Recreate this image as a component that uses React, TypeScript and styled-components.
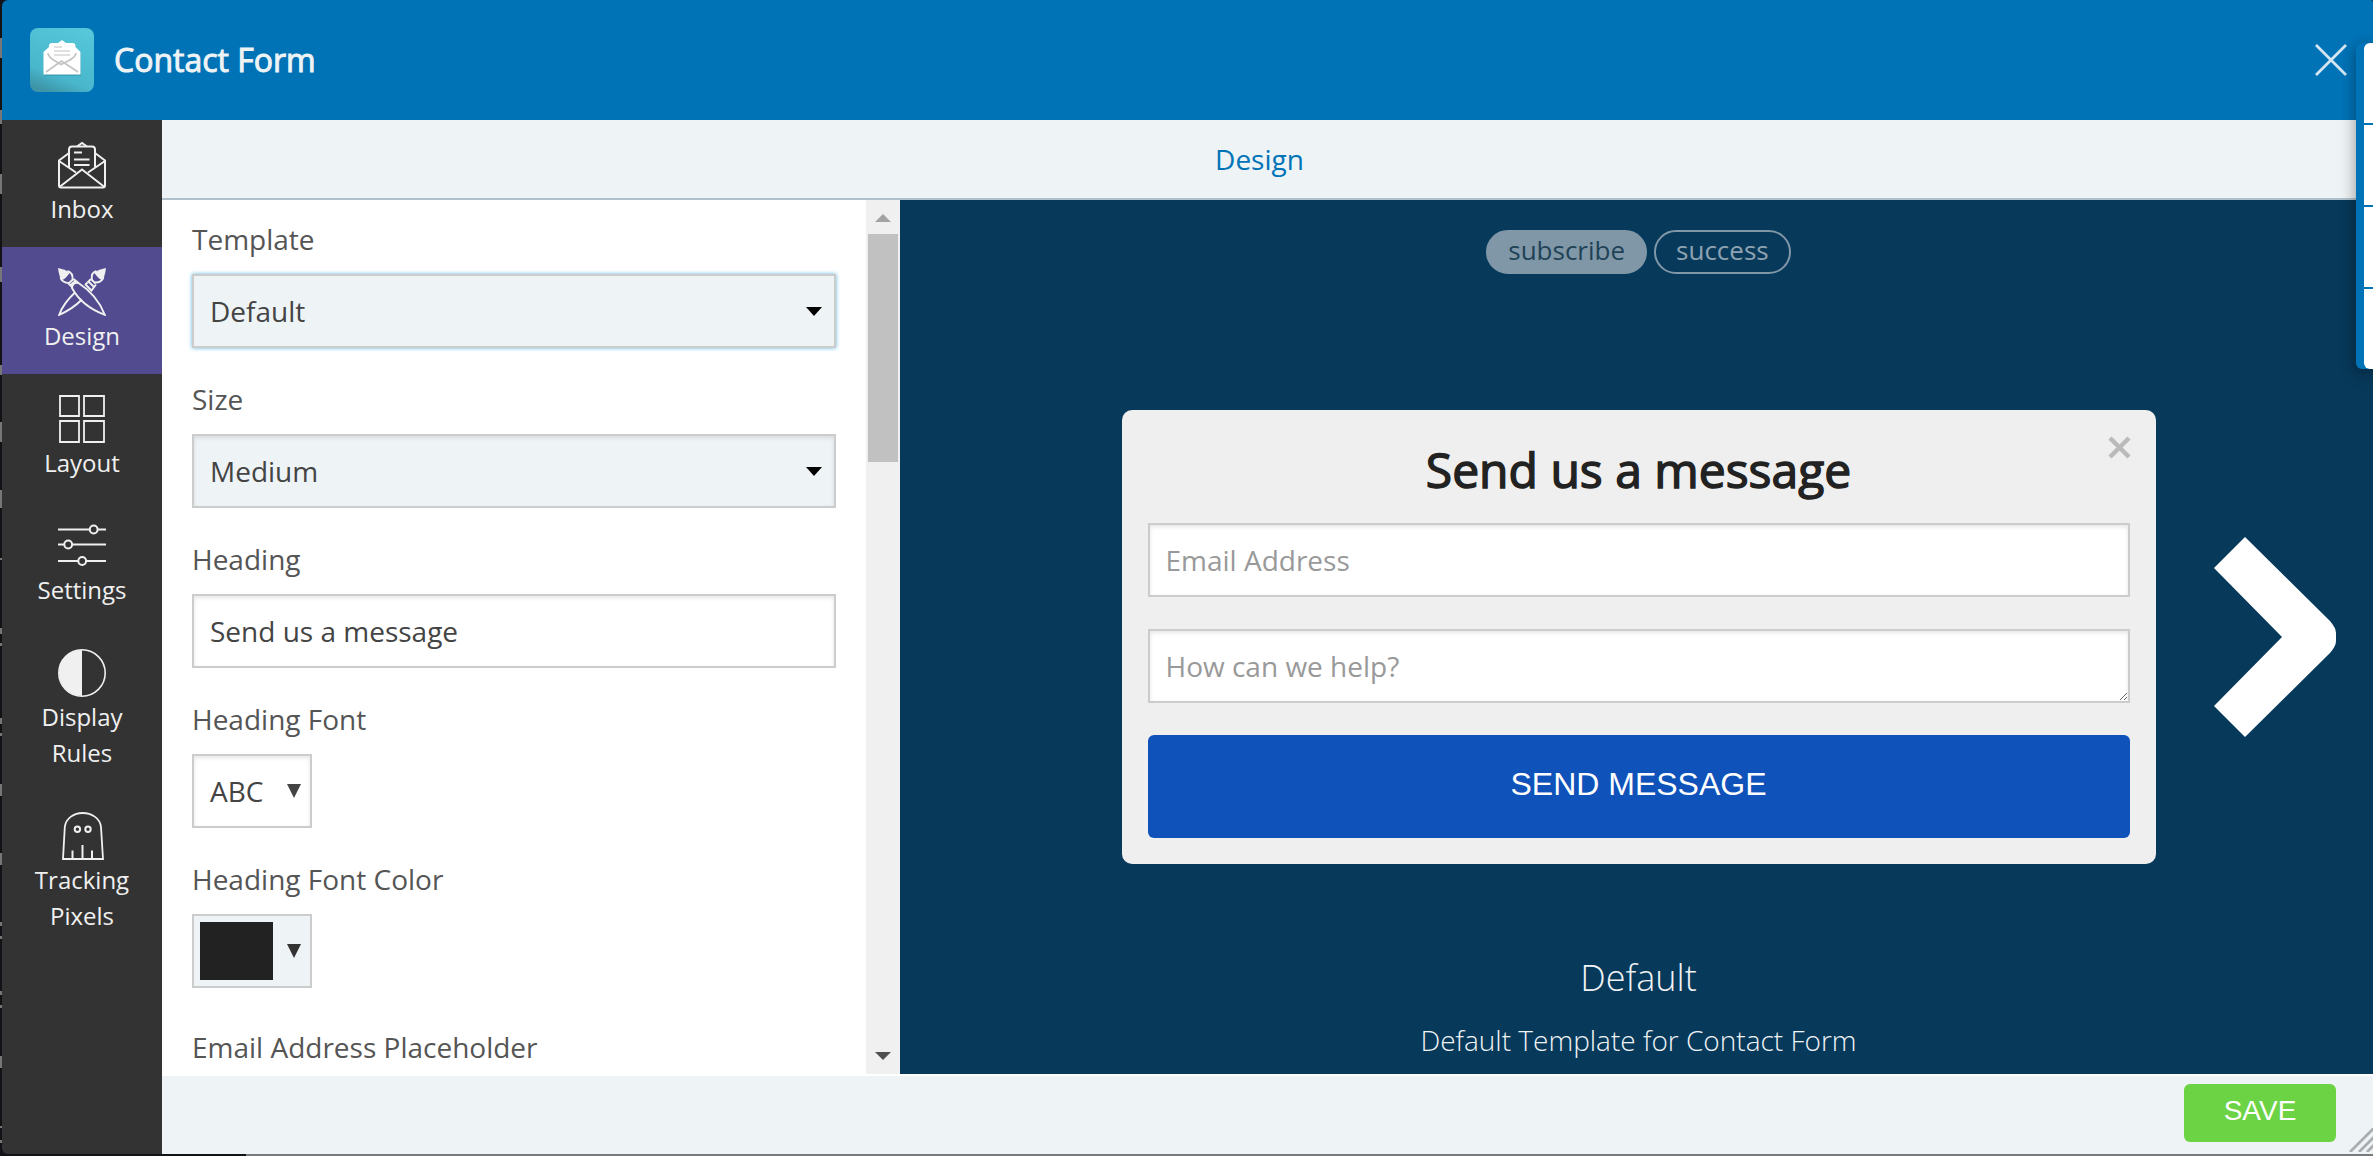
import React from "react";
import styled, { createGlobalStyle, css } from "styled-components";

const color = {
  blue: "#0073b7",
  navy: "#07395a",
  mist: "#eef3f6",
  sidebar: "#333333",
  violet: "#524b8f",
  border: "#cccccc",
  text: "#555555",
};

const sans = `"Open Sans", "Noto Sans", sans-serif`;
const arial = `"Liberation Sans", Arial, sans-serif`;

const Global = createGlobalStyle`
  *, *::before, *::after { box-sizing: border-box; }
  body { margin: 0; background: #131317; font-family: ${sans}; }
  button, input, select, textarea { font: inherit; margin: 0; }
`;

/* Slivers of the page behind the dialog that show at its left edge: [top, bottom]. */
const slivers = [
  [38, 58], [110, 124], [174, 194], [267, 282], [365, 375], [422, 442], [490, 508],
  [558, 560], [628, 634], [643, 646], [718, 724], [733, 736], [784, 796], [853, 865],
  [922, 926], [936, 939], [991, 995], [1005, 1008], [1056, 1068], [1126, 1128], [1140, 1143],
];
const sliverGradient = `linear-gradient(to bottom, ${slivers
  .map(([a, b]) => `transparent ${a}px, #777 ${a}px, #777 ${b}px, transparent ${b}px`)
  .join(", ")})`;

const Backdrop = styled.div`
  display: flex;
  height: 100vh;
  overflow: hidden;
  padding: 0 0 2px 2px;
  background:
    ${sliverGradient} left top / 2px 100% no-repeat,
    linear-gradient(to right, #131317 246px, #7a7a7a 246px) left bottom / 100% 2px no-repeat,
    #131317;
`;

const Dialog = styled.section`
  flex: 1;
  min-width: 0;
  display: flex;
  flex-direction: column;
  border-radius: 6px 2px 0 6px;
  overflow: hidden;
`;

const TitleBar = styled.header`
  display: flex;
  align-items: center;
  gap: 20px;
  height: 120px;
  padding: 0 26px 0 28px;
  background: ${color.blue};
`;

const fauxBold = css`
  font-weight: 400;
  -webkit-text-stroke: 0.03em currentColor;
`;

const DialogTitle = styled.h1`
  ${fauxBold}
  flex: 1;
  margin: 0;
  font-size: 32px;
  line-height: 48px;
  color: ${color.mist};
`;

const PlainButton = styled.button`
  display: flex;
  padding: 0;
  border: 0;
  background: none;
  cursor: pointer;
`;

const Body = styled.div`
  flex: 1;
  min-height: 0;
  display: flex;
`;

const Sidebar = styled.nav`
  width: 160px;
  background: ${color.sidebar};
`;

const NavItem = styled.a<{ $active?: boolean }>`
  display: flex;
  flex-direction: column;
  align-items: center;
  gap: 2px;
  padding: 21px 30px 20px;
  font-size: 24px;
  line-height: 36px;
  text-align: center;
  text-decoration: none;
  color: #f0f0f0;
  background: ${(p) => (p.$active ? color.violet : "transparent")};
`;

const Main = styled.div`
  flex: 1;
  min-width: 0;
  display: flex;
  flex-direction: column;
  background: ${color.mist};
`;

const TabBar = styled.div`
  display: flex;
  justify-content: center;
  align-items: center;
  height: 80px;
  padding-right: 16px;
  border-bottom: 2px solid #b0c1cc;
`;

const Tab = styled.a`
  font-size: 28px;
  line-height: 42px;
  color: ${color.blue};
  text-decoration: none;
`;

const Workspace = styled.div`
  flex: 1;
  min-height: 0;
  display: flex;
  border-bottom: 2px solid #fff;
`;

const FormPane = styled.div`
  display: flex;
  width: 738px;
  background: #fff;
`;

const Form = styled.form`
  flex: 1;
  min-width: 0;
  overflow: hidden;
  padding: 18px 30px 0;
`;

const Field = styled.div<{ $spaced?: boolean }>`
  display: flex;
  flex-direction: column;
  align-items: flex-start;
  gap: 14px;
  margin-bottom: ${(p) => (p.$spaced ? 38 : 30)}px;
`;

const Label = styled.label`
  font-size: 28px;
  line-height: 42px;
  color: ${color.text};
`;

const boxed = css`
  height: 74px;
  border: 2px solid ${color.border};
  border-radius: 0;
  font-size: 28px;
  color: #444;
  outline: none;
`;

const TextInput = styled.input`
  ${boxed}
  width: 100%;
  padding: 0 16px;
  background: #fff;
  box-shadow: inset 0 2px 4px rgba(0, 0, 0, 0.1);
  &::placeholder { color: #999; opacity: 1; }
`;

const SelectWrap = styled.div`
  display: grid;
  align-items: center;
  width: 100%;
  > * { grid-area: 1 / 1; }
  > svg { justify-self: end; margin-right: 14px; pointer-events: none; }
`;

const Select = styled.select<{ $lit?: boolean }>`
  ${boxed}
  appearance: none;
  width: 100%;
  padding: 0 16px;
  background: ${color.mist};
  box-shadow: ${(p) =>
    p.$lit ? "0 0 4px #5bb4dc" : "inset 0 2px 4px rgba(0, 0, 0, 0.1)"};
`;

const PickerButton = styled.button<{ $tinted?: boolean }>`
  ${boxed}
  display: flex;
  align-items: center;
  justify-content: space-between;
  width: 120px;
  padding: ${(p) => (p.$tinted ? "0 9px 0 6px" : "0 9px 0 16px")};
  background: ${(p) => (p.$tinted ? color.mist : "#fff")};
  box-shadow: ${(p) => (p.$tinted ? "none" : "inset 0 2px 4px rgba(0, 0, 0, 0.1)")};
`;

const Swatch = styled.span`
  width: 73px;
  height: 58px;
  background: #222;
`;

const ScrollTrack = styled.div`
  display: flex;
  flex-direction: column;
  align-items: center;
  width: 34px;
  padding: 14px 0;
  background: #f0f0f0;
`;

const ScrollThumb = styled.div`
  width: 30px;
  height: 27%;
  margin: 12px 0 auto;
  background: #c1c1c1;
`;

const Preview = styled.div`
  flex: 1;
  min-width: 0;
  display: grid;
  grid-template-rows: 1fr auto 1fr;
  padding: 0 37px 0 41px;
  background: ${color.navy};
`;

const Steps = styled.div`
  display: flex;
  justify-content: center;
  align-items: flex-start;
  gap: 7px;
  padding-top: 30px;
`;

const Step = styled.button<{ $active?: boolean }>`
  height: 44px;
  padding: 0 20px 4px;
  border: 2px solid #8097a8;
  border-radius: 22px;
  font-size: 26px;
  line-height: 36px;
  color: ${(p) => (p.$active ? "#1f4256" : "#8ea3b2")};
  background: ${(p) => (p.$active ? "#8097a8" : "transparent")};
`;

const Stage = styled.div`
  display: grid;
  grid-template-columns: 1fr minmax(0, 1034px) 1fr;
  align-items: center;
`;

const Next = styled(PlainButton)`
  grid-column: 3;
  justify-self: end;
`;

const Card = styled.form`
  position: relative;
  grid-column: 2;
  display: flex;
  flex-direction: column;
  gap: 32px;
  padding: 24px 26px 26px;
  border-radius: 10px;
  background: #efefef;
`;

const CardHead = styled.div`
  display: flex;
  flex-direction: column;
  gap: 17px;
`;

const CardTitle = styled.h2`
  ${fauxBold}
  margin: 0;
  font-size: 48px;
  line-height: 72px;
  text-align: center;
  color: #222;
`;

const CardClose = styled(PlainButton)`
  position: absolute;
  top: 26px;
  right: 25px;
`;

const Message = styled.textarea`
  ${boxed}
  display: block;
  width: 100%;
  padding: 14px 16px;
  line-height: 42px;
  background: #fff;
  overflow: hidden;
  resize: both;
  box-shadow: inset 0 2px 4px rgba(0, 0, 0, 0.1);
  &::placeholder { color: #999; opacity: 1; }
`;

const Submit = styled.button`
  height: 103px;
  padding: 0 0 4px;
  border: 0;
  border-radius: 6px;
  font-family: ${arial};
  font-size: 32px;
  color: #fff;
  background: #0f52ba;
`;

const Caption = styled.div`
  align-self: end;
  display: flex;
  flex-direction: column;
  gap: 14px;
  padding-bottom: 13px;
  text-align: center;
  font-weight: 300;
  color: #f0f3f5;
`;

const CaptionName = styled.h3`
  margin: 0;
  font-size: 36px;
  font-weight: 300;
  line-height: 54px;
`;

const CaptionText = styled.p`
  margin: 0;
  font-size: 28px;
  line-height: 42px;
`;

const Footer = styled.footer`
  position: relative;
  display: flex;
  justify-content: flex-end;
  height: 78px;
  padding: 8px 37px 12px 0;
`;

const Save = styled.button`
  width: 152px;
  padding: 0 0 4px;
  border: 0;
  border-radius: 6px;
  font-family: ${arial};
  font-size: 28px;
  color: #fff;
  background: #6cd345;
`;

const Grip = styled.svg`
  position: absolute;
  right: 0;
  bottom: 2px;
`;

const Drawer = styled.aside`
  position: fixed;
  top: 43px;
  right: 0;
  width: 17px;
  padding-left: 8px;
  border-radius: 6px 0 0 6px;
  background: ${color.blue};
  box-shadow: 0 4px 16px rgba(0, 0, 0, 0.4);
`;

const DrawerList = styled.div`
  display: grid;
  gap: 2px;
  border-radius: 6px 0 0 6px;
  overflow: hidden;
`;

const DrawerCell = styled.div`
  height: 80px;
  background: #fff;
`;

const Icon = ({ children }: { children: React.ReactNode }) => (
  <svg width="48" height="48" viewBox="0 0 48 48" fill="none" stroke="#f0f0f0" strokeWidth="2" aria-hidden="true">
    {children}
  </svg>
);

const InboxIcon = () => (
  <Icon>
    <path d="M11 12 1 19.5V44.500Q1 46.500 3 46.500H45Q47 46.500 47 44.500V19.500L37 12" />
    <path d="M1 20 18 31.500M47 20 30 31.500M1.500 46 24 28.500 46.500 46" />
    <path d="M11 26.500V8.500Q11 5.500 14 5.500H34Q37 5.500 37 8.500V26.500" />
    <path d="M19 5.500 24 2 29 5.500" />
    <path d="M16 11.500H24M16 18.500H31.500M16 24H31.500" />
  </Icon>
);

const DesignIcon = () => (
  <Icon>
    <g strokeWidth="1.900">
      <path d="M17 24.500C9.500 31.500 4 39 1.200 46.800C10 43 17.500 38 24 31.500" />
      <path d="M27 17 29.500 14.500M27.500 16.500 33.500 22.500 38 16.500" />
      <path d="M29.500 14.500 33 11M30.500 13.500 36 19M33 11 37.500 15.500" />
      <path d="M34 11.500C33 7 35 4 38.500 2.800M36.500 14.500C41 15 44.500 12.500 45.500 9.500" />
      <path d="M36 4.500Q41 1 48 0Q47 8 44.500 12.500Q40 10.500 36 4.500Z" fill="#f0f0f0" stroke="none" />
      <path d="M14 20C14 16 17 14 20.500 15C33 23 42 34.500 46.800 46.800C34 42 21 33 14 20Z" />
      <path d="M14.500 19.500 10.500 15.500M20 14.500 15.500 11M12 17.500 18 12.500M10.500 15.500 15.500 11" />
      <path d="M11 15C6 15 3 12 2.500 9.500M14.500 11.500C15 7 13 4 9.500 2.800" />
      <path d="M12 4.500Q7 1 0 0Q1 8 3.500 12.500Q8 10.500 12 4.500Z" fill="#f0f0f0" stroke="none" />
    </g>
  </Icon>
);

const LayoutIcon = () => (
  <Icon>
    <path d="M2 1H21V21H2ZM26 1H46V21H26ZM2 26H21V47H2ZM26 26H46V47H26Z" strokeWidth="1.800" />
  </Icon>
);

const SettingsIcon = () => (
  <Icon>
    <path d="M0 7.500H32M40 7.500H48M0 22.500H6M14 22.500H48M0 39H20M28 39H48" />
    <circle cx="35.700" cy="7.500" r="3.900" />
    <circle cx="10.200" cy="22.500" r="3.900" />
    <circle cx="24.200" cy="39" r="3.900" />
  </Icon>
);

const RulesIcon = () => (
  <Icon>
    <circle cx="24" cy="24" r="23.200" strokeWidth="1.600" />
    <path d="M24 1A23 23 0 0 0 24 47Z" fill="#f0f0f0" stroke="none" />
  </Icon>
);

const GhostIcon = () => (
  <Icon>
    <path d="M5 47 6.800 15C8 6 16 1 24.700 1S42 6 43 15L45 47Z" strokeWidth="1.800" />
    <circle cx="19.400" cy="17.300" r="2.700" />
    <circle cx="30" cy="17.300" r="2.700" />
    <path d="M14.500 38.500V46M24.500 33V46M34 38.500V46" />
  </Icon>
);

const AppLogo = () => (
  <svg width="64" height="64" viewBox="0 0 64 64" aria-hidden="true">
    <defs>
      <linearGradient id="logo" x1="0.700" y1="0" x2="0.300" y2="1">
        <stop offset="0" stopColor="#55c7d9" />
        <stop offset="0.750" stopColor="#49b6cc" />
        <stop offset="1" stopColor="#3d95a7" />
      </linearGradient>
    </defs>
    <rect width="64" height="64" rx="8" fill="url(#logo)" />
    <path d="M14 25 19 20V18Q19 15.500 22 15.500H28L32 12.500 36 15.500H43Q46 15.500 46 18V20L51 25V48H14Z" fill="#2c8fa2" opacity="0.500" />
    <path d="M13.500 24 19 19V17.500Q19 15 22 15H28L32 12 36 15H42.500Q45.500 15 45.500 17.500V19L50.500 24V46.500H13.500Z" fill="#fff" />
    <path d="M18 25Q18 29 26 33.500L31 36.500 38 33Q46 29 46 25M16 44 31.500 33 48 44" fill="none" stroke="#c4c4c4" strokeWidth="1.800" />
    <path d="M24 19H32M24 23H40M24 27H40" stroke="#d6d6d6" strokeWidth="1.500" />
  </svg>
);

const Triangle = ({ w, h, fill, up }: { w: number; h: number; fill: string; up?: boolean }) => (
  <svg width={w} height={h} viewBox="0 0 10 10" preserveAspectRatio="none" aria-hidden="true">
    <path d={up ? "M0 10H10L5 0Z" : "M0 0H10L5 10Z"} fill={fill} />
  </svg>
);

const navItems = [
  { label: "Inbox", icon: <InboxIcon /> },
  { label: "Design", icon: <DesignIcon />, active: true },
  { label: "Layout", icon: <LayoutIcon /> },
  { label: "Settings", icon: <SettingsIcon /> },
  { label: "Display Rules", icon: <RulesIcon /> },
  { label: "Tracking Pixels", icon: <GhostIcon /> },
];

export default function App() {
  return (
    <>
      <Global />
      <Backdrop>
        <Dialog>
          <TitleBar>
            <AppLogo />
            <DialogTitle>Contact Form</DialogTitle>
            <PlainButton type="button" aria-label="Close">
              <svg width="32" height="32" viewBox="0 0 32 32" aria-hidden="true">
                <path d="M1 1 31 31M31 1 1 31" stroke="#d3e6f2" strokeWidth="2.800" />
              </svg>
            </PlainButton>
          </TitleBar>
          <Body>
            <Sidebar>
              {navItems.map((item) => (
                <NavItem key={item.label} href="#" $active={item.active}>
                  {item.icon}
                  {item.label}
                </NavItem>
              ))}
            </Sidebar>
            <Main>
              <TabBar>
                <Tab href="#">Design</Tab>
              </TabBar>
              <Workspace>
                <FormPane>
                  <Form>
                    <Field>
                      <Label htmlFor="template">Template</Label>
                      <SelectWrap>
                        <Select id="template" $lit>
                          <option>Default</option>
                        </Select>
                        <Triangle w={16} h={9} fill="#000" />
                      </SelectWrap>
                    </Field>
                    <Field>
                      <Label htmlFor="size">Size</Label>
                      <SelectWrap>
                        <Select id="size">
                          <option>Medium</option>
                        </Select>
                        <Triangle w={16} h={9} fill="#000" />
                      </SelectWrap>
                    </Field>
                    <Field>
                      <Label htmlFor="heading">Heading</Label>
                      <TextInput id="heading" defaultValue="Send us a message" />
                    </Field>
                    <Field>
                      <Label htmlFor="heading-font">Heading Font</Label>
                      <PickerButton id="heading-font" type="button">
                        ABC
                        <Triangle w={14} h={14} fill="#444" />
                      </PickerButton>
                    </Field>
                    <Field $spaced>
                      <Label htmlFor="heading-color">Heading Font Color</Label>
                      <PickerButton id="heading-color" type="button" $tinted>
                        <Swatch />
                        <Triangle w={14} h={14} fill="#333" />
                      </PickerButton>
                    </Field>
                    <Field>
                      <Label htmlFor="email-placeholder">Email Address Placeholder</Label>
                      <TextInput id="email-placeholder" />
                    </Field>
                  </Form>
                  <ScrollTrack>
                    <Triangle w={16} h={8} fill="#a3a3a3" up />
                    <ScrollThumb />
                    <Triangle w={16} h={8} fill="#505050" />
                  </ScrollTrack>
                </FormPane>
                <Preview>
                  <Steps>
                    <Step type="button" $active>subscribe</Step>
                    <Step type="button">success</Step>
                  </Steps>
                  <Stage>
                    <Card>
                      <CardClose type="button" aria-label="Close form">
                        <svg width="23" height="23" viewBox="0 0 23 23" aria-hidden="true">
                          <path d="M2 2 21 21M21 2 2 21" stroke="#bababa" strokeWidth="4.500" />
                        </svg>
                      </CardClose>
                      <CardHead>
                        <CardTitle>Send us a message</CardTitle>
                        <TextInput type="email" aria-label="Email Address" placeholder="Email Address" />
                      </CardHead>
                      <Message rows={1} aria-label="How can we help?" placeholder="How can we help?" />
                      <Submit type="button">SEND MESSAGE</Submit>
                    </Card>
                    <Next type="button" aria-label="Next template">
                      <svg width="122" height="200" viewBox="0 0 122 200" aria-hidden="true">
                        <path d="M31 0 0 31 68 100 0 169 31 200 116 116Q122 109 122 104V96Q122 91 116 84Z" fill="#fff" />
                      </svg>
                    </Next>
                  </Stage>
                  <Caption>
                    <CaptionName>Default</CaptionName>
                    <CaptionText>Default Template for Contact Form</CaptionText>
                  </Caption>
                </Preview>
              </Workspace>
              <Footer>
                <Save type="button">SAVE</Save>
                <Grip width="24" height="24" viewBox="0 0 24 24" aria-hidden="true">
                  <path d="M1 24 25 0M10 24 25 9M18 24 25 17" stroke="#aaadaf" strokeWidth="2.800" />
                </Grip>
              </Footer>
            </Main>
          </Body>
        </Dialog>
        <Drawer>
          <DrawerList>
            <DrawerCell />
            <DrawerCell />
            <DrawerCell />
            <DrawerCell />
          </DrawerList>
        </Drawer>
      </Backdrop>
    </>
  );
}
